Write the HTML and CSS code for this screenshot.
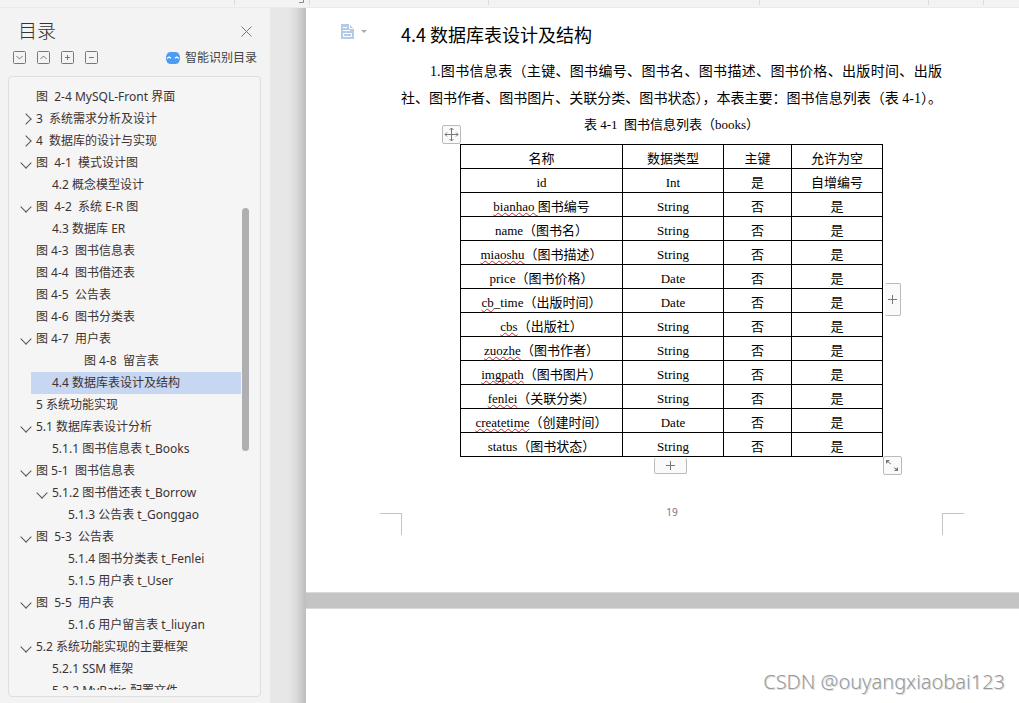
FILE: index.html
```
<!DOCTYPE html>
<html lang="zh-CN">
<head>
<meta charset="utf-8">
<title>4.4 数据库表设计及结构</title>
<link rel="stylesheet" href="styles.css">
</head>
<body>
<div class="app">
  <header class="ruler" aria-hidden="true">
    <svg class="ruler-marks" width="1019" height="8" viewBox="0 0 1019 8"><path d="M234.500 0v5M309.500 0v5M488.500 0v5M759.500 0v5M928.500 0v5M983.500 0v5" stroke="#dcdcdc" fill="none"/><path d="M299 2.500h4.500V0" stroke="#888" fill="none"/></svg>
  </header>
  <div class="workspace">
    <aside class="sidebar">
      <div class="side-head">
        <h2 class="side-title">目录</h2>
        <button class="icon-btn" aria-label="关闭"><svg width="11" height="11" viewBox="0 0 11 11"><path d="M.5.5l10 10M10.500.5l-10 10" stroke="#777" fill="none"/></svg></button>
      </div>
      <div class="side-tools">
        <button class="icon-btn" aria-label="展开"><svg width="13" height="13" viewBox="0 0 13 13" fill="none" stroke="#777"><rect x=".5" y=".5" width="12" height="12" rx="1"/><path d="M3.500 5l3 3 3-3"/></svg></button>
        <button class="icon-btn" aria-label="收起"><svg width="13" height="13" viewBox="0 0 13 13" fill="none" stroke="#777"><rect x=".5" y=".5" width="12" height="12" rx="1"/><path d="M3.500 8l3-3 3 3"/></svg></button>
        <button class="icon-btn" aria-label="增加"><svg width="13" height="13" viewBox="0 0 13 13" fill="none" stroke="#777"><rect x=".5" y=".5" width="12" height="12" rx="1"/><path d="M4 6.500h5M6.500 4v5"/></svg></button>
        <button class="icon-btn" aria-label="减少"><svg width="13" height="13" viewBox="0 0 13 13" fill="none" stroke="#777"><rect x=".5" y=".5" width="12" height="12" rx="1"/><path d="M4 6.500h5"/></svg></button>
        <button class="smart-btn"><svg width="14" height="12" viewBox="0 0 14 12"><path d="M4.500 0h5C12.500 0 14 3 14 6s-1.500 6-4.500 6h-5C1.500 12 0 9 0 6s1.500-6 4.500-6z" fill="#4c9bf5"/><path d="M1 6.500L3.200 5 5 6.300M9 6.300L10.800 5 13 6.500" stroke="#fff" stroke-width="1.300" fill="none"/></svg>智能识别目录</button>
      </div>
      <nav class="toc">
        <ul class="toc-list">
          <li class="row"><span class="arrow"></span><a href="#s">图  2-4 MySQL-Front 界面</a></li>
          <li class="row"><span class="arrow closed"></span><a href="#s">3  系统需求分析及设计</a></li>
          <li class="row"><span class="arrow closed"></span><a href="#s">4  数据库的设计与实现</a></li>
          <li class="row"><span class="arrow open"></span><a href="#s">图  4-1  模式设计图</a></li>
          <li class="row level-2"><span class="arrow"></span><a href="#s">4.2 概念模型设计</a></li>
          <li class="row"><span class="arrow open"></span><a href="#s">图  4-2  系统 E-R 图</a></li>
          <li class="row level-2"><span class="arrow"></span><a href="#s">4.3 数据库 ER</a></li>
          <li class="row"><span class="arrow"></span><a href="#s">图 4-3  图书信息表</a></li>
          <li class="row"><span class="arrow"></span><a href="#s">图 4-4  图书借还表</a></li>
          <li class="row"><span class="arrow"></span><a href="#s">图 4-5  公告表</a></li>
          <li class="row"><span class="arrow"></span><a href="#s">图 4-6  图书分类表</a></li>
          <li class="row"><span class="arrow open"></span><a href="#s">图 4-7  用户表</a></li>
          <li class="row level-4"><span class="arrow"></span><a href="#s">图 4-8  留言表</a></li>
          <li class="row level-2 current"><span class="arrow"></span><a href="#s">4.4 数据库表设计及结构</a></li>
          <li class="row"><span class="arrow"></span><a href="#s">5 系统功能实现</a></li>
          <li class="row"><span class="arrow open"></span><a href="#s">5.1 数据库表设计分析</a></li>
          <li class="row level-2"><span class="arrow"></span><a href="#s">5.1.1 图书信息表 t_Books</a></li>
          <li class="row"><span class="arrow open"></span><a href="#s">图 5-1  图书信息表</a></li>
          <li class="row level-2"><span class="arrow open"></span><a href="#s">5.1.2 图书借还表 t_Borrow</a></li>
          <li class="row level-3"><span class="arrow"></span><a href="#s">5.1.3 公告表 t_Gonggao</a></li>
          <li class="row"><span class="arrow open"></span><a href="#s">图  5-3  公告表</a></li>
          <li class="row level-3"><span class="arrow"></span><a href="#s">5.1.4 图书分类表 t_Fenlei</a></li>
          <li class="row level-3"><span class="arrow"></span><a href="#s">5.1.5 用户表 t_User</a></li>
          <li class="row"><span class="arrow open"></span><a href="#s">图  5-5  用户表</a></li>
          <li class="row level-3"><span class="arrow"></span><a href="#s">5.1.6 用户留言表 t_liuyan</a></li>
          <li class="row"><span class="arrow open"></span><a href="#s">5.2 系统功能实现的主要框架</a></li>
          <li class="row level-2"><span class="arrow"></span><a href="#s">5.2.1 SSM 框架</a></li>
          <li class="row level-2"><span class="arrow"></span><a href="#s">5.2.2 MyBatis 配置文件</a></li>
        </ul>
        <span class="thumb"></span>
      </nav>
    </aside>
    <div class="gutter"></div>
    <main class="pages">
      <article class="page">
        <button class="icon-btn para-menu" aria-label="段落"><svg width="26" height="15" viewBox="0 0 26 15"><path d="M0 0h8l5 5v10H0z" fill="#b5c9ea"/><path d="M8.500 0v4.500H13M2 3.500h4M2 6.500h7M2.500 9.500h8v3h-8zM6 12.500h3" stroke="#fff" fill="none"/><path d="M20 6h6l-3 3z" fill="#aaa"/></svg></button>
        <h1 class="heading" id="s">4.4 数据库表设计及结构</h1>
        <p class="para">1.图书信息表（主键、图书编号、图书名、图书描述、图书价格、出版时间、出版社、图书作者、图书图片、关联分类、图书状态），本表主要：图书信息列表（表 4-1）。</p>
        <div class="figure">
          <table class="grid">
            <caption>表 4-1&nbsp; 图书信息列表（books）</caption>
            <colgroup><col class="c-name"><col class="c-type"><col class="c-key"><col class="c-null"></colgroup>
            <tbody>
            <tr><th>名称</th><th>数据类型</th><th>主键</th><th>允许为空</th></tr>
            <tr><td>id</td><td>Int</td><td>是</td><td>自增编号</td></tr>
            <tr><td><span class="typo">bianhao </span>图书编号</td><td>String</td><td>否</td><td>是</td></tr>
            <tr><td>name（图书名）</td><td>String</td><td>否</td><td>是</td></tr>
            <tr><td><span class="typo">miaoshu</span>（图书描述）</td><td>String</td><td>否</td><td>是</td></tr>
            <tr><td>price（图书价格）</td><td>Date</td><td>否</td><td>是</td></tr>
            <tr><td><span class="typo">cb</span>_time（出版时间）</td><td>Date</td><td>否</td><td>是</td></tr>
            <tr><td><span class="typo">cbs</span>（出版社）</td><td>String</td><td>否</td><td>是</td></tr>
            <tr><td><span class="typo">zuozhe</span>（图书作者）</td><td>String</td><td>否</td><td>是</td></tr>
            <tr><td><span class="typo">imgpath</span>（图书图片）</td><td>String</td><td>否</td><td>是</td></tr>
            <tr><td><span class="typo">fenlei</span>（关联分类）</td><td>String</td><td>否</td><td>是</td></tr>
            <tr><td><span class="typo">createtime</span>（创建时间）</td><td>Date</td><td>否</td><td>是</td></tr>
            <tr><td>status（图书状态）</td><td>String</td><td>否</td><td>是</td></tr>
            </tbody>
          </table>
          <button class="handle move" aria-label="移动表格"><svg width="15" height="15" viewBox="0 0 15 15" stroke="#777" fill="none"><path d="M7.500 1v13M1 7.500h13M5.500 3l2-2 2 2M5.500 12l2 2 2-2M3 5.500l-2 2 2 2M12 5.500l2 2-2 2"/></svg></button>
          <button class="handle add-col" aria-label="添加列"><svg width="9" height="9" viewBox="0 0 9 9" stroke="#777"><path d="M4.500 0v9M0 4.500h9"/></svg></button>
          <button class="handle add-row" aria-label="添加行"><svg width="9" height="9" viewBox="0 0 9 9" stroke="#777"><path d="M4.500 0v9M0 4.500h9"/></svg></button>
          <button class="handle resize" aria-label="调整大小"><svg width="15" height="15" viewBox="0 0 15 15"><path d="M1 2h4L1 6zM13 13H9l4-4z" fill="#777"/><path d="M3 4l3 2M9 9.500l3 2" stroke="#888"/></svg></button>
        </div>
        <footer class="foot"><span class="mark left"></span><span class="number">19</span><span class="mark right"></span></footer>
      </article>
      <article class="page next"></article>
    </main>
  </div>
  <div class="watermark">CSDN @ouyangxiaobai123</div>
</div>
</body>
</html>
```
FILE: styles.css
```
* { box-sizing: border-box; }
body { margin: 0; font-family: "Noto Sans", "Noto Sans CJK SC", sans-serif; color: #3c3232; }
button { font: inherit; color: inherit; background: none; border: 0; padding: 0; }
svg { display: block; }
.app { position: relative; display: flex; flex-direction: column; height: 100vh; overflow: hidden; }
.ruler { height: 8px; flex: none; background: #f3f3f3; border-bottom: 1px solid #ebebeb; overflow: hidden; }
.workspace { flex: 1; min-height: 0; display: flex; }

.sidebar { width: 270px; flex: none; background: #f3f3f3; display: flex; flex-direction: column; padding: 10px 9px 6px 8px; }
.side-head { display: flex; align-items: center; justify-content: space-between; padding: 0 9px 0 10px; height: 26px; }
.side-title { margin: 0; font-size: 19px; line-height: 24px; padding-bottom: 2px; font-weight: 300; font-family: "Noto Sans CJK SC", sans-serif; color: #333; }
.side-tools { display: flex; align-items: center; gap: 11px; height: 27px; padding: 0 4px 0 5px; margin-bottom: 5px; }
.smart-btn { margin-left: auto; display: flex; align-items: center; gap: 5px; font-size: 12px; line-height: 18px; padding-top: 1px; color: #444; white-space: nowrap; }
.toc { position: relative; flex: 1; min-height: 0; background: #f5f5f5; border: 1px solid #dedede; border-radius: 4px; padding: 9px 19px 6px 0; }
.toc-list { list-style: none; margin: 0; padding: 0; height: 100%; overflow: hidden; }
.row { display: flex; align-items: center; height: 22px; font-size: 12px; line-height: 22px; padding-left: 9px; }
.row a { color: inherit; text-decoration: none; white-space: pre; }
.level-2 { padding-left: 25px; }
.level-3 { padding-left: 41px; }
.level-4 { padding-left: 57px; }
.current { margin-left: 22px; padding-left: 3px; background: #c7d6f1; }
.arrow { width: 16px; margin-right: 2px; flex: none; display: flex; justify-content: center; }
.open::before, .closed::before { content: ""; width: 7px; height: 7px; border: solid #555; border-width: 0 1px 1px 0; transform: rotate(45deg); }
.closed::before { transform: rotate(-45deg); }
.thumb { position: absolute; right: 11px; top: 131px; width: 7px; height: 243px; border-radius: 4px; background: #afafb1; }

.gutter { width: 36px; flex: none; background: linear-gradient(to right, #e7e7e7 52%, #d8d8d8 75%, #bdbdbd); }
.pages { flex: 1; min-width: 0; display: flex; flex-direction: column; background: #c4c4c4; gap: 15px; }
.page { position: relative; background: #fff; border: solid #dadada; border-width: 0 0 1px; padding: 13px 77px 57px 95px; }
.next { flex: 1; border-width: 1px 0 0; }
.para-menu { position: absolute; left: 35px; top: 16px; }
.heading { margin: 0 0 10px; font-family: "Noto Sans CJK SC", sans-serif; font-size: 18px; line-height: 27px; font-weight: 400; color: #000; }
.para { margin: 0; font-family: "Liberation Serif", "Noto Sans CJK SC", serif; font-size: 14px; line-height: 27px; color: #000; text-indent: 29px; text-align: justify; text-align-last: justify; }
.figure { position: relative; width: 423px; margin: 0 auto; }
.grid { width: 100%; table-layout: fixed; border-collapse: collapse; font-family: "Liberation Serif", "Noto Sans CJK SC", serif; font-size: 13px; line-height: 18px; color: #000; }
.grid caption { height: 32px; line-height: 26px; white-space: nowrap; }
.grid th, .grid td { border: 1px solid #000; height: 24px; padding: 5px 0 0; text-align: center; font-weight: 400; white-space: nowrap; }
.c-name { width: 162px; }
.c-type { width: 101px; }
.c-key { width: 68px; }
.typo { white-space: pre; text-decoration: underline wavy #e02020 1px; text-decoration-skip-ink: none; text-underline-offset: 1px; }
.handle { position: absolute; display: flex; align-items: center; justify-content: center; background: #fafafa; border: 1px solid #bbb; border-radius: 2px; }
.move { left: -18px; top: 13px; width: 19px; height: 19px; }
.resize { right: -19px; bottom: -18px; width: 19px; height: 19px; }
.add-col { right: -18px; top: 171px; width: 16px; height: 33px; border-left: 0; }
.add-row { left: 194px; bottom: -17px; width: 33px; height: 16px; border-top: 0; }
.foot { display: flex; justify-content: space-between; margin: 56px -22px 0 -21px; height: 22px; }
.mark { width: 22px; height: 22px; border-top: 1px solid #c4c4c4; }
.mark.left { border-right: 1px solid #c4c4c4; }
.mark.right { border-left: 1px solid #c4c4c4; }
.number { font-size: 10px; line-height: 14px; margin-top: -8px; color: #777; }
.watermark { position: absolute; right: 14px; bottom: 7px; font-size: 20px; line-height: 28px; font-weight: 300; color: #999; text-shadow: 1px 1px 0 #ddd; }
```
